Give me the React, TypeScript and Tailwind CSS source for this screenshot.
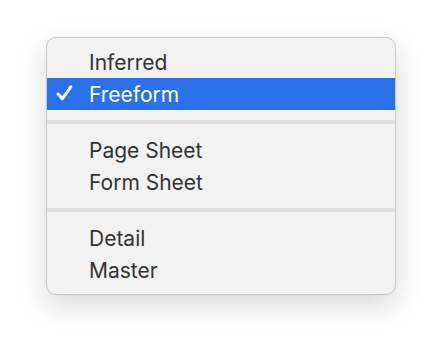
type Item = { label: string; checked?: boolean; selected?: boolean };

const groups: Item[][] = [
  [{ label: "Inferred" }, { label: "Freeform", checked: true, selected: true }],
  [{ label: "Page Sheet" }, { label: "Form Sheet" }],
  [{ label: "Detail" }, { label: "Master" }],
];

const MenuRow = ({ item }: { item: Item }) => (
  <div
    className={`flex items-center h-[32px] ${
      item.selected ? "bg-[#2a72e9] text-white" : "text-[#333333]"
    }`}
  >
    <div className="w-[42px] pl-[9px] flex items-center">
      {item.checked && (
        <svg width="17" height="16" viewBox="0 0 17 16" fill="none" className="-mt-[2px]">
          <path
            d="M2.2 9 L6.3 13.8 L14.8 1.8"
            stroke="white"
            strokeWidth="3"
            strokeLinecap="round"
            strokeLinejoin="round"
          />
        </svg>
      )}
    </div>
    <span className="text-[21px] leading-none">{item.label}</span>
  </div>
);

export default function App() {
  return (
    <div className="w-[442px] h-[348px] bg-white pl-[46px] pt-[37px]" style={{ fontFamily: "Inter, 'Noto Sans', sans-serif" }}>
      <div className="w-[350px] rounded-[10px] bg-[#f2f2f2] border border-[#c8c8c8] shadow-[0_10px_28px_rgba(0,0,0,0.16)] py-[8px] overflow-hidden">
        {groups.map((group, i) => (
          <div key={i}>
            {i > 0 && (
              <div className="py-[10px]">
                <div className="h-[4px] bg-[#e0e0e0]" />
              </div>
            )}
            {group.map((item) => (
              <MenuRow key={item.label} item={item} />
            ))}
          </div>
        ))}
      </div>
    </div>
  );
}
